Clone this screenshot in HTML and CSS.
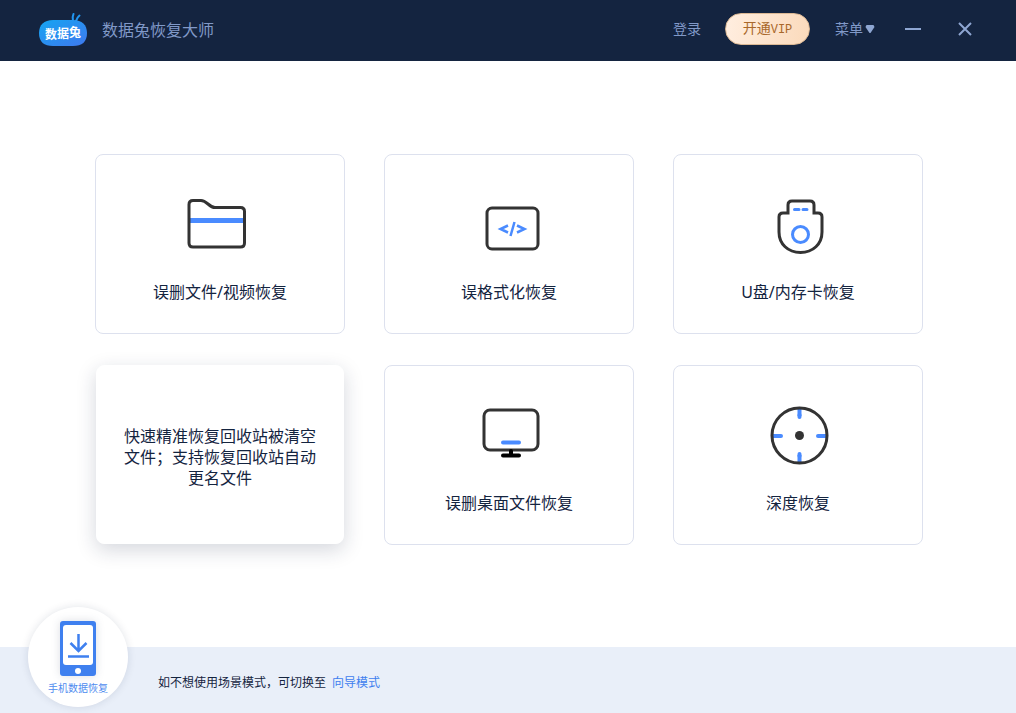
FILE: index.html
```html
<!DOCTYPE html>
<html lang="zh-CN">
<head>
<meta charset="utf-8">
<title>数据兔恢复大师</title>
<link rel="stylesheet" href="styles.css">
</head>
<body>
<header class="topbar">
  <svg class="logo" viewBox="0 0 50 36" role="img" aria-label="数据兔">
    <defs>
      <linearGradient id="logo-fill" x1="0" y1="0" x2="1" y2="1">
        <stop offset="0" stop-color="#14a5f2"/>
        <stop offset="1" stop-color="#3f78ee"/>
      </linearGradient>
    </defs>
    <path d="M35 9Q34 5 35.500 2M38 9Q39 5.500 41.500 3.500" fill="none" stroke="#2196f1" stroke-width="2" stroke-linecap="round"/>
    <path d="M15 8H35C44 8 49 13 49 21C49 30 44 34 35 34H15C6 34 1 30 1 21C1 13 6 8 15 8Z" fill="url(#logo-fill)"/>
    <text class="logo-text" x="7" y="27">数</text>
    <text class="logo-text" x="19" y="26">据</text>
    <text class="logo-text" x="31" y="25">兔</text>
  </svg>
  <h1 class="title">数据兔恢复大师</h1>
  <nav class="actions">
    <button class="text-btn login">登录</button>
    <button class="vip">开通<span class="vip-latin">VIP</span></button>
    <button class="text-btn menu">菜单<svg class="caret" viewBox="0 0 10 8"><path d="M1.500 0H8.500L9.500 2L5.500 8H4.500L0.500 2Z"/></svg></button>
    <button class="win-btn minimize" aria-label="最小化"><svg viewBox="0 0 16 16"><path d="M0 8H16"/></svg></button>
    <button class="win-btn" aria-label="关闭"><svg viewBox="0 0 16 16"><path d="M2 2L14 14M14 2L2 14"/></svg></button>
  </nav>
</header>

<main class="modes">
  <button class="card">
    <svg class="icon" viewBox="0 0 72 76">
      <path class="blue" stroke-width="5" d="M6 28.500H59"/>
      <path class="line" d="M9 8.500H17C23 8.500 25 15.500 31 15.500H56.500Q60.500 15.500 60.500 19.500V51Q60.500 55 56.500 55H9Q5 55 5 51V12.500Q5 8.500 9 8.500Z"/>
    </svg>
    <span class="label">误删文件/视频恢复</span>
  </button>
  <button class="card">
    <svg class="icon" viewBox="0 0 72 76">
      <rect class="line" x="14" y="16" width="51" height="41" rx="5"/>
      <path class="blue" stroke-width="2.500" d="M35 33.500L27.500 37L35 40.500M44 33.500L51.500 37L44 40.500M41.500 30L37.500 44"/>
    </svg>
    <span class="label">误格式化恢复</span>
  </button>
  <button class="card">
    <svg class="icon" viewBox="0 0 72 76">
      <path class="line" d="M26 21V13Q26 9 30 9H48Q52 9 52 13V21H56Q60 21 60 25V40C60 52 51 60.500 38.500 60.500S17 52 17 40V25Q17 21 21 21Z"/>
      <circle class="blue" stroke-width="3" cx="38.500" cy="42.500" r="8"/>
      <path class="blue round" stroke-width="3" d="M32.500 17.500H37M41 17.500H45"/>
    </svg>
    <span class="label">U盘/内存卡恢复</span>
  </button>
  <button class="card card-active">
    <span class="description">快速精准恢复回收站被清空文件；支持恢复回收站自动更名文件</span>
  </button>
  <button class="card">
    <svg class="icon" viewBox="0 0 72 76">
      <rect class="line" x="11" y="7" width="54" height="40" rx="6"/>
      <path class="blue round" stroke-width="4" d="M30 39.500H46"/>
      <path class="stand" d="M38 48V52M30 52.500H46"/>
    </svg>
    <span class="label">误删桌面文件恢复</span>
  </button>
  <button class="card">
    <svg class="icon" viewBox="0 0 72 76">
      <path class="blue" stroke-width="4" d="M10 33H18M57 33H65M37.500 5V13M37.500 52V60"/>
      <path class="blue round" stroke-width="4" d="M17 33H19M56 33H58M37.500 12V14M37.500 51V53"/>
      <circle class="line" cx="37.500" cy="32.500" r="27.500"/>
      <circle class="dot" cx="37.500" cy="32.500" r="4.500"/>
    </svg>
    <span class="label">深度恢复</span>
  </button>
</main>

<footer class="bottombar">
  <button class="phone">
    <svg class="phone-icon" viewBox="0 0 36 55">
      <rect width="36" height="55" rx="3" fill="#3f80ef"/>
      <rect x="3" y="4" width="30" height="40" rx="3" fill="#fff"/>
      <circle cx="18" cy="50" r="3" fill="#fff"/>
      <path d="M18.500 13V30M10.500 22L18.500 30L26.500 22M8 35.500H29" fill="none" stroke="#3f80ef" stroke-width="2.500"/>
    </svg>
    <span class="phone-label">手机数据恢复</span>
  </button>
  <p class="hint">如不想使用场景模式，可切换至<a class="link" href="#">向导模式</a></p>
</footer>
</body>
</html>
```

FILE: styles.css
```css
* {
  box-sizing: border-box;
}

body {
  margin: 0;
  min-height: 100vh;
  display: flex;
  flex-direction: column;
  background: #fff;
  color: #14243f;
  font-family: "Noto Sans", "Noto Sans CJK SC", sans-serif;
}

button {
  margin: 0;
  padding: 0;
  border: 0;
  background: none;
  color: inherit;
  font: inherit;
  cursor: pointer;
}

svg {
  display: block;
  flex: none;
}

.topbar {
  display: flex;
  align-items: center;
  height: 61px;
  padding: 0 43px 2px 38px;
  background: #142440;
  color: #8199c8;
}

.logo {
  width: 50px;
  height: 36px;
}

.logo-text {
  fill: #fff;
  font-size: 12px;
  font-weight: 700;
}

.title {
  margin: 0 auto 0 14px;
  font-size: 16px;
  font-weight: 400;
  line-height: 24px;
}

.actions {
  display: flex;
  align-items: center;
  height: 32px;
  margin-bottom: 2px;
}

.text-btn {
  font-size: 14px;
  line-height: 20px;
}

.vip {
  width: 85px;
  height: 32px;
  margin: 0 25px 0 24px;
  border: 1px solid #dcb995;
  border-radius: 16px;
  background: linear-gradient(100deg, #ffeee0, #fbdabb);
  color: #a9682b;
  font-size: 14px;
  line-height: 20px;
}

.vip-latin {
  font-family: "Liberation Mono", monospace;
  font-size: 12px;
}

.menu {
  display: flex;
  align-items: center;
  gap: 2px;
}

.caret {
  width: 10px;
  height: 8px;
  fill: #8ea6d2;
}

.win-btn {
  width: 16px;
  height: 16px;
  margin-left: 36px;
}

.win-btn svg {
  width: 16px;
  height: 16px;
  fill: none;
  stroke: #8ea6d2;
  stroke-width: 2;
}

.minimize {
  margin-left: 30px;
}

.modes {
  flex: 1;
  display: grid;
  grid-template-columns: repeat(3, 250px);
  grid-auto-rows: 180px;
  gap: 31px 39px;
  justify-content: center;
  padding: 93px 0 40px 2px;
}

.card {
  display: flex;
  flex-direction: column;
  align-items: center;
  gap: 12px;
  padding-top: 37px;
  border: 1px solid #dde1ee;
  border-radius: 8px;
  background: #fff;
  font-size: 16px;
}

.card-active {
  justify-content: center;
  margin: 0 1px 1px;
  padding: 5px 26px 0;
  border-color: #fff;
  box-shadow: 0 6px 20px rgba(20, 36, 64, 0.18);
}

.icon {
  width: 72px;
  height: 76px;
}

.label {
  line-height: 24px;
}

.description {
  width: 192px;
  line-height: 21px;
}

.line {
  fill: none;
  stroke: #333;
  stroke-width: 3;
}

.blue {
  fill: none;
  stroke: #4a8bff;
}

.round {
  stroke-linecap: round;
}

.stand {
  fill: none;
  stroke: #000;
  stroke-width: 4;
  stroke-linecap: round;
}

.dot {
  fill: #333;
}

.bottombar {
  display: flex;
  align-items: center;
  height: 66px;
  padding-left: 28px;
  background: #e9eff9;
}

.phone {
  display: flex;
  flex-direction: column;
  align-items: center;
  gap: 4px;
  width: 100px;
  height: 100px;
  margin: -40px 30px 0 0;
  padding-top: 14px;
  align-self: flex-start;
  border-radius: 50%;
  background: #fff;
  box-shadow: 0 0 8px rgba(20, 36, 64, 0.12);
}

.phone-icon {
  width: 36px;
  height: 55px;
  filter: drop-shadow(0 0 4px rgba(20, 36, 64, 0.15));
}

.phone-label {
  color: #4e8bef;
  font-size: 10px;
  line-height: 16px;
}

.hint {
  margin: 6px 0 0;
  font-size: 12px;
  line-height: 18px;
}

.link {
  margin-left: 6px;
  color: #3f80ef;
  text-decoration: none;
}
```
